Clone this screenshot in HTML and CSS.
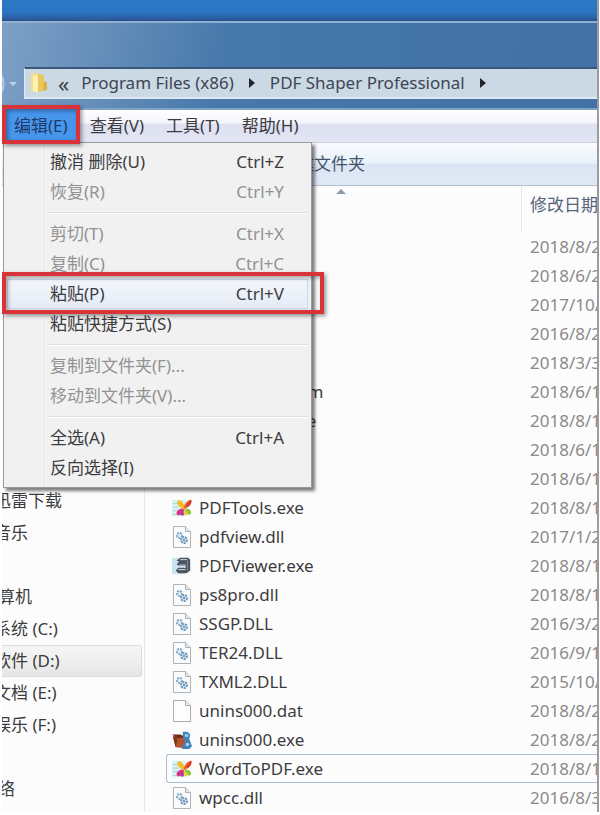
FILE: index.html
```html
<!DOCTYPE html>
<html lang="zh-CN">
<head>
    <meta charset="UTF-8">
    <meta name="viewport" content="width=device-width, initial-scale=1.0">
    <title>PDF Shaper Professional</title>
    <link rel="stylesheet" href="styles.css">
</head>
<body>
    <!-- 图标 -->
    <svg class="defs" width="0" height="0">
        <symbol id="dll" viewBox="0 0 20 22">
            <path d="M1.500 .5h12l5 5v16h-17z" fill="#fafbfc" stroke="#adb3b9"/>
            <path d="M13.500 .5v5h5" fill="#e3e8ec" stroke="#adb3b9"/>
            <circle cx="7.500" cy="9.500" r="2.500" fill="#e6f0f7" stroke="#86a7c3" stroke-width="2" stroke-dasharray="2 1"/>
            <circle cx="12" cy="14" r="3" fill="#cfe3f2" stroke="#7096b8" stroke-width="2" stroke-dasharray="2 1"/>
            <circle cx="12" cy="14" r="1" fill="#5a7fa3"/>
        </symbol>
        <symbol id="dat" viewBox="0 0 20 22">
            <path d="M1.500 .5h12l5 5v16h-17z" fill="#fdfdfd" stroke="#a9aeb3"/>
            <path d="M13.500 .5v5h5" fill="#e8ebee" stroke="#a9aeb3"/>
        </symbol>
        <symbol id="pdf" viewBox="0 0 22 22">
            <path d="M0 2h15v18H0z" fill="#d9f1f2"/>
            <path d="M1 6h6M1 10h6M1 14h5M1 18h6" stroke="#a5d4da"/>
            <path d="M13 12C9 11 5 7 6 4s6-2 8 6z" fill="#f6bd22"/>
            <path d="M13 11c0-4 4-9 8-9 2 3-2 8-7 10z" fill="#f0602c"/>
            <path d="M16 9c1-3 3-5 5-7 1 3-1 6-4 8z" fill="#d9362f"/>
            <path d="M13 12c-3-1-8 1-8 5 1 4 7 2 8-4z" fill="#e3307f"/>
            <path d="M13 13c-3 1-4 4-3 6 3 2 4-2 4-6z" fill="#9c3fb4"/>
            <path d="M14 12c4-1 7 1 7 4s-5 4-7-3z" fill="#8cc63a"/>
            <path d="M14 13c3 2 4 5 2 6s-4-2-3-6z" fill="#f0cf2c"/>
        </symbol>
        <symbol id="viewer" viewBox="0 0 22 22">
            <path d="M0 2h14v18H0z" fill="#cbe6f3"/>
            <path d="M5 5l4-3h9l2 2v12l-4 3H7l-3-3 3-3h8v-2H8l-3-2 3-3h7V6H7z" fill="#4b5561"/>
            <path d="M9 4h8M8 10h7M7 15h8" stroke="#dfe5ea" stroke-width="1"/>
            <path d="M17 5v11" stroke="#87919b"/>
        </symbol>
        <symbol id="setup" viewBox="0 0 22 22">
            <path d="M1 7l8-1h6v14l-11-1z" fill="#b4532f"/>
            <path d="M1 7l3 12 2-9z" fill="#7d3119"/>
            <path d="M0 5l6 4 9-1-6-3z" fill="#6e2b18"/>
            <path d="M12 2h5l3 3-1 5 3 8-3 3h-8l1-5 3-3-3-5z" fill="#3f83bd"/>
            <circle cx="16" cy="6" r="2" fill="#9ccbea"/>
            <circle cx="17" cy="16" r="2" fill="#a7d0ec"/>
        </symbol>
    </svg>

    <div class="window">
        <div class="title_bar"></div>

        <!-- 地址栏 -->
        <div class="nav">
            <svg class="nav_arrow" viewBox="0 0 22 30"><path d="M0 9q3 8 0 16" fill="none" stroke="#b4cbe2" stroke-width="2"/><path d="M7 15h8l-4 4z" fill="#bcd3e8"/></svg>
            <div class="address">
                <svg class="folder" viewBox="0 0 20 22">
                    <path d="M2 2l7-1v19l-7-1z" fill="#f5dc85"/>
                    <path d="M9 2l6 1v15l-6 2z" fill="#e8c75c"/>
                    <path d="M4 3l5 1v17l-5-2z" fill="#fdf0b2"/>
                    <path d="M15 9l3 1v8l-4 1z" fill="#d9b245"/>
                </svg>
                <span class="more">«</span>
                <a href="#">Program Files (x86)</a>
                <svg class="arrow" viewBox="0 0 6 10"><path d="M0 0l6 5-6 5z"/></svg>
                <a href="#">PDF Shaper Professional</a>
                <svg class="arrow" viewBox="0 0 6 10"><path d="M0 0l6 5-6 5z"/></svg>
            </div>
        </div>

        <!-- 菜单栏 -->
        <div class="menu_bar">
            <button type="button" class="active">编辑(E)</button>
            <button type="button">查看(V)</button>
            <button type="button">工具(T)</button>
            <button type="button">帮助(H)</button>
            <div class="mark mark_edit"></div>

            <div class="menu">
                <button type="button"><span>撤消 删除(U)</span><span>Ctrl+Z</span></button>
                <button type="button" disabled><span>恢复(R)</span><span>Ctrl+Y</span></button>
                <hr>
                <button type="button" disabled><span>剪切(T)</span><span>Ctrl+X</span></button>
                <button type="button" disabled><span>复制(C)</span><span>Ctrl+C</span></button>
                <button type="button" class="hover"><span>粘贴(P)</span><span>Ctrl+V</span></button>
                <button type="button"><span>粘贴快捷方式(S)</span></button>
                <hr>
                <button type="button" disabled><span>复制到文件夹(F)...</span></button>
                <button type="button" disabled><span>移动到文件夹(V)...</span></button>
                <hr>
                <button type="button"><span>全选(A)</span><span>Ctrl+A</span></button>
                <button type="button"><span>反向选择(I)</span></button>
                <div class="mark mark_paste"></div>
            </div>
        </div>

        <div class="tool_bar">
            <button type="button">新建文件夹</button>
        </div>

        <div class="content">
            <ul class="side">
                <li>迅雷下载</li>
                <li>音乐</li>
                <li class="root group">计算机</li>
                <li>系统 (C:)</li>
                <li class="selected">软件 (D:)</li>
                <li>文档 (E:)</li>
                <li>娱乐 (F:)</li>
                <li class="root group">网络</li>
            </ul>

            <div class="files">
                <table>
                    <thead>
                        <tr><th><svg class="sort" viewBox="0 0 10 6"><path d="M0 6l5-5 5 5z" fill="#8d9cab"/></svg></th><th class="date">修改日期</th></tr>
                    </thead>
                    <tbody>
                        <tr><td></td><td>2018/8/2</td></tr>
                        <tr><td></td><td>2018/6/2</td></tr>
                        <tr><td></td><td>2017/10/</td></tr>
                        <tr><td></td><td>2016/8/2</td></tr>
                        <tr><td></td><td>2018/3/3</td></tr>
                        <tr><td><span class="no_icon">PDFShaper.chm</span></td><td>2018/6/1</td></tr>
                        <tr><td><span class="no_icon">PDFShaper.exe</span></td><td>2018/8/1</td></tr>
                        <tr><td></td><td>2018/6/1</td></tr>
                        <tr><td></td><td>2018/6/1</td></tr>
                        <tr><td><svg class="icon"><use href="#pdf"/></svg>PDFTools.exe</td><td>2018/8/1</td></tr>
                        <tr><td><svg class="icon"><use href="#dll"/></svg>pdfview.dll</td><td>2017/1/2</td></tr>
                        <tr><td><svg class="icon"><use href="#viewer"/></svg>PDFViewer.exe</td><td>2018/8/1</td></tr>
                        <tr><td><svg class="icon"><use href="#dll"/></svg>ps8pro.dll</td><td>2018/8/1</td></tr>
                        <tr><td><svg class="icon"><use href="#dll"/></svg>SSGP.DLL</td><td>2016/3/2</td></tr>
                        <tr><td><svg class="icon"><use href="#dll"/></svg>TER24.DLL</td><td>2016/9/1</td></tr>
                        <tr><td><svg class="icon"><use href="#dll"/></svg>TXML2.DLL</td><td>2015/10/</td></tr>
                        <tr><td><svg class="icon"><use href="#dat"/></svg>unins000.dat</td><td>2018/8/2</td></tr>
                        <tr><td><svg class="icon"><use href="#setup"/></svg>unins000.exe</td><td>2018/8/2</td></tr>
                        <tr class="focus"><td><svg class="icon"><use href="#pdf"/></svg>WordToPDF.exe</td><td>2018/8/1</td></tr>
                        <tr><td><svg class="icon"><use href="#dll"/></svg>wpcc.dll</td><td>2016/8/3</td></tr>
                    </tbody>
                </table>
            </div>
        </div>
    </div>
</body>
</html>
```
FILE: styles.css
```css
*{
    box-sizing: border-box;
}
body{
    margin: 0;
    padding: 0 1px 0 2px;
    background-color: white;
    color: #3c3c40;
    font-family: "Noto Sans", "Noto Sans CJK SC", sans-serif;
    font-size: 17px;
    line-height: 24px;
}
button{
    border: none;
    background: none;
    padding: 0;
    color: inherit;
    font: inherit;
    white-space: nowrap;
}
.defs{
    position: absolute;
}
.window{
    border-right: 2px solid #9b9ca0;
    background-color: #fcfcfc;
    overflow: hidden;
}
.title_bar{
    height: 21px;
    background: linear-gradient(#2b79c6, #2b74c0 60%, #2a5c9f 90%, #2a4f82);
}
/* 地址栏 */
.nav{
    display: flex;
    height: 89px;
    padding: 44px 0 10px;
    border-top: 2px solid #8fb0d2;
    border-bottom: 2px solid #7fa3c2;
    background: linear-gradient(100deg, #7d9fc6, #6f95bf 10%, #4678aa 38%, #4272a5);
}
.nav_arrow{
    width: 22px;
    height: 30px;
    flex: none;
}
.address{
    display: flex;
    align-items: center;
    flex: 1;
    height: 32px;
    padding-left: 4px;
    border: 1px solid #e3ecf4;
    border-top: 2px solid #39597c;
    border-right: none;
    border-bottom: 2px solid #dce9f4;
    background-color: #cbd9e5;
}
.address a{
    color: #3c4552;
    text-decoration: none;
    white-space: nowrap;
}
.folder{
    width: 20px;
    height: 22px;
}
.more{
    margin: 0 12px 0 9px;
    font-size: 22px;
}
.arrow{
    width: 6px;
    height: 10px;
    margin: 0 15px;
    fill: #22262c;
}
/* 菜单栏 */
.menu_bar{
    position: relative;
    display: flex;
    align-items: center;
    gap: 22px;
    height: 33px;
    padding-left: 12px;
    border-bottom: 1px solid #cdd1dd;
    background: linear-gradient(white, #f4f5fb 40%, #dee1f1 45%, #e2e5f4);
}
.menu_bar > .active{
    background-color: #4796ee;
    box-shadow: 0 0 0 8px #4796ee;
    color: #1f3a68;
}
.mark{
    position: absolute;
    border: 4px solid #d9333a;
    box-shadow: 2px 2px 4px #00000066, inset 2px 2px 4px #00000055;
}
.mark_edit{
    left: 0;
    top: -5px;
    width: 78px;
    height: 39px;
    z-index: 2;
}
.mark_paste{
    left: -2px;
    top: 129px;
    width: 322px;
    height: 42px;
}
.menu{
    position: absolute;
    left: 1px;
    top: 32px;
    z-index: 1;
    width: 309px;
    padding: 4px 3px;
    border: 1px solid #999a9c;
    background: linear-gradient(90deg, #f1f1f1 40px, #dfe1e3 40px, white 42px, #f1f1f1 42px);
    box-shadow: 3px 3px 3px #00000080;
}
.menu button{
    display: flex;
    justify-content: space-between;
    align-items: center;
    width: 100%;
    height: 30px;
    padding: 0 24px 0 43px;
}
.menu button:disabled{
    color: #929292;
}
.menu .hover{
    background: linear-gradient(#f3f6fb, #e4ebf6);
    box-shadow: inset 0 0 0 1px #c5d8ee;
}
.menu hr{
    height: 2px;
    margin: 5px 0 5px 40px;
    border: none;
    border-top: 1px solid #dfdfdf;
    background-color: white;
}
.tool_bar{
    display: flex;
    align-items: center;
    height: 43px;
    padding-left: 278px;
    border-bottom: 1px solid #b3bfd0;
    background: linear-gradient(#f9fbfe, #e9f1fb 48%, #dbe5f3 50%, #dfe9f6);
    color: #45546b;
}
/* 左侧导航 */
.content{
    display: flex;
}
.side{
    width: 143px;
    flex: none;
    margin: 0;
    padding: 299px 0 0;
    border-right: 1px solid #dfe9f3;
    list-style: none;
    overflow: hidden;
}
.side li{
    height: 32px;
    line-height: 32px;
    text-indent: -8px;
    white-space: nowrap;
}
.side .root{
    text-indent: -21px;
}
.side .group{
    margin-top: 32px;
}
.side .selected{
    margin-right: 2px;
    border: 1px solid #dcdcdc;
    border-left: none;
    border-radius: 0 3px 3px 0;
    background: linear-gradient(#f6f6f6, #e6e6e6);
    line-height: 30px;
}
/* 文件列表 */
.files{
    flex: 1;
    min-width: 0;
    padding-left: 21px;
}
table{
    width: 100%;
    table-layout: fixed;
    border-spacing: 0;
}
th{
    height: 46px;
    padding: 0;
    color: #56657b;
    font-weight: normal;
    text-align: left;
    vertical-align: top;
}
.date{
    width: 76px;
    padding: 7px 0 0 8px;
    border-left: 1px solid #e4e9ef;
    white-space: nowrap;
    overflow: hidden;
}
.sort{
    display: block;
    width: 10px;
    height: 6px;
    margin: 2px 0 0 170px;
}
td{
    height: 29px;
    padding: 0 0 0 6px;
    white-space: nowrap;
    overflow: hidden;
}
td + td{
    padding-left: 9px;
    color: #8a8a8a;
}
.icon{
    width: 20px;
    height: 22px;
    margin-right: 7px;
    vertical-align: -5px;
}
.no_icon{
    margin-left: 27px;
}
.focus td{
    border: 1px solid #a9bdcd;
    border-width: 1px 0;
}
.focus td:first-child{
    border-left-width: 1px;
    border-radius: 3px 0 0 3px;
    padding-left: 5px;
}
```
